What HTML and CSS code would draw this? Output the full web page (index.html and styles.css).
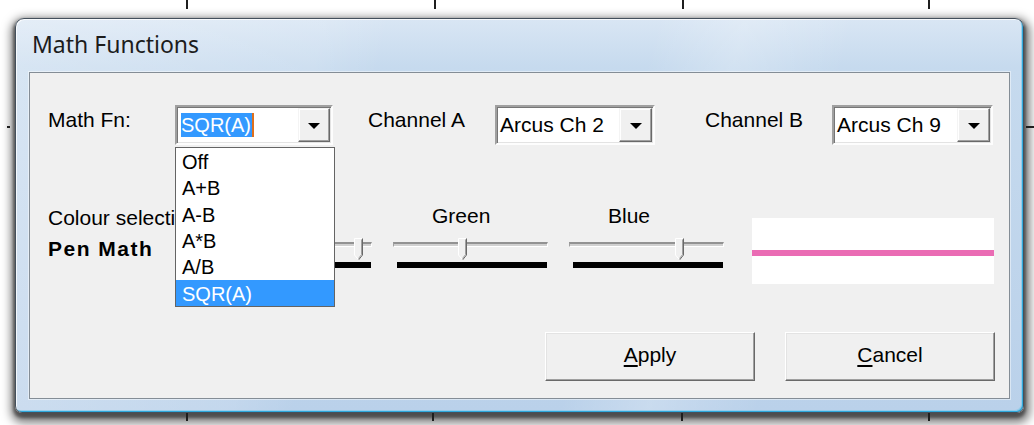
FILE: index.html
```html
<!DOCTYPE html>
<html lang="en">
<head>
<meta charset="utf-8">
<title>Math Functions</title>
<link rel="stylesheet" href="styles.css">
</head>
<body>
<div class="desk">
  <!-- axis ticks of the chart the dialog sits on -->
  <div class="chart">
    <span class="tick tt x1"></span>
    <span class="tick tt x2"></span>
    <span class="tick tt x3"></span>
    <span class="tick tt x4"></span>
    <span class="tick tb b1"></span>
    <span class="tick tb b2"></span>
    <span class="tick tb b3"></span>
    <span class="tick tb b4"></span>
    <span class="tick tl"></span>
    <span class="tick tr"></span>
  </div>

  <div class="window">
    <div class="titlebar"><span class="title">Math Functions</span></div>

    <div class="client">
      <div class="row-fn">
        <span class="lbl">Math Fn:</span>
        <div class="combo combo-fn">
          <div class="combo-text"><span class="sel">SQR(A)</span></div>
          <div class="combo-btn"><span class="arrow"></span></div>
          <ul class="droplist">
            <li>Off</li>
            <li>A+B</li>
            <li>A-B</li>
            <li>A*B</li>
            <li>A/B</li>
            <li class="hot">SQR(A)</li>
          </ul>
        </div>

        <span class="lbl lbl-a">Channel A</span>
        <div class="combo combo-a">
          <div class="combo-text">Arcus Ch 2</div>
          <div class="combo-btn"><span class="arrow"></span></div>
        </div>

        <span class="lbl lbl-b">Channel B</span>
        <div class="combo combo-b">
          <div class="combo-text">Arcus Ch 9</div>
          <div class="combo-btn"><span class="arrow"></span></div>
        </div>
      </div>

      <div class="row-colour">
        <div class="pen-col">
          <div class="cap">Colour selection</div>
          <div class="pen-name">Pen Math</div>
        </div>

        <div class="channel">
          <div class="ch-label">Red</div>
          <div class="track-area">
            <div class="groove"></div>
            <svg class="thumb" style="--v:234" width="9" height="23" viewBox="0 0 9 23">
              <polygon points="0,0 9,0 9,17 4.5,22.5 0,17" fill="#f0f0f0"/>
              <polyline points="0.5,17 0.5,0.5 8,0.5" fill="none" stroke="#fff"/>
              <polyline points="8.5,0.5 8.5,17 4.5,22" fill="none" stroke="#696969"/>
              <polyline points="7.5,1.5 7.5,16.6 4.5,20.5" fill="none" stroke="#a0a0a0"/>
              <polyline points="0.5,17 4.3,21.5" fill="none" stroke="#fff"/>
            </svg>
            <div class="level"></div>
          </div>
        </div>

        <div class="channel">
          <div class="ch-label">Green</div>
          <div class="track-area">
            <div class="groove"></div>
            <svg class="thumb" style="--v:108" width="9" height="23" viewBox="0 0 9 23">
              <polygon points="0,0 9,0 9,17 4.5,22.5 0,17" fill="#f0f0f0"/>
              <polyline points="0.5,17 0.5,0.5 8,0.5" fill="none" stroke="#fff"/>
              <polyline points="8.5,0.5 8.5,17 4.5,22" fill="none" stroke="#696969"/>
              <polyline points="7.5,1.5 7.5,16.6 4.5,20.5" fill="none" stroke="#a0a0a0"/>
              <polyline points="0.5,17 4.3,21.5" fill="none" stroke="#fff"/>
            </svg>
            <div class="level"></div>
          </div>
        </div>

        <div class="channel">
          <div class="ch-label">Blue</div>
          <div class="track-area">
            <div class="groove"></div>
            <svg class="thumb" style="--v:180" width="9" height="23" viewBox="0 0 9 23">
              <polygon points="0,0 9,0 9,17 4.5,22.5 0,17" fill="#f0f0f0"/>
              <polyline points="0.5,17 0.5,0.5 8,0.5" fill="none" stroke="#fff"/>
              <polyline points="8.5,0.5 8.5,17 4.5,22" fill="none" stroke="#696969"/>
              <polyline points="7.5,1.5 7.5,16.6 4.5,20.5" fill="none" stroke="#a0a0a0"/>
              <polyline points="0.5,17 4.3,21.5" fill="none" stroke="#fff"/>
            </svg>
            <div class="level"></div>
          </div>
        </div>

        <div class="preview"><div class="pen-line"></div></div>
      </div>

      <div class="row-buttons">
        <button class="btn" type="button"><u>A</u>pply</button>
        <button class="btn" type="button"><u>C</u>ancel</button>
      </div>
    </div>
  </div>
</div>
</body>
</html>
```

FILE: styles.css
```css
html, body {
  margin: 0;
  background: #fff;
}

body {
  font-family: "Liberation Sans", Arial, sans-serif;
  font-size: 21px;
  color: #000;
}

.desk {
  position: relative;
  width: 1034px;
  height: 425px;
  overflow: hidden;
  box-sizing: border-box;
  padding: 18px 0 0 15px;
}

/* chart ticks behind the dialog */
.chart .tick {
  position: absolute;
  background: #1e1e1e;
}
.tt { top: 0; width: 2px; height: 9px; }
.tb { top: 413px; width: 2px; height: 8px; z-index: 2; }
.x1 { left: 186px; }
.x2 { left: 434px; }
.x3 { left: 682px; }
.x4 { left: 928px; }
.b1 { left: 186px; }
.b2 { left: 432px; }
.b3 { left: 681px; }
.b4 { left: 928px; }
.tl { left: 7px; top: 126px; width: 3px; height: 2px; z-index: 2; }
.tr { left: 1026px; top: 126px; width: 8px; height: 2px; z-index: 2; }

/* Aero frame */
.window {
  position: relative;
  z-index: 1;
  width: 1009px;
  height: 395px;
  box-sizing: border-box;
  display: flex;
  flex-direction: column;
  padding: 0 13px 13px;
  border: 1px solid #44505c;
  border-radius: 9px 9px 7px 7px;
  background:
    linear-gradient(104deg,
      rgba(255,255,255,0.3) 0, rgba(255,255,255,0.14) 28%,
      rgba(255,255,255,0) 34%, rgba(255,255,255,0) 58%,
      rgba(255,255,255,0.22) 66%, rgba(255,255,255,0) 76%),
    linear-gradient(180deg, #d9e6f4 0, #c6daee 48px, #bad1ea 100%);
  box-shadow:
    inset 1px 1px 0 rgba(255,255,255,0.75),
    inset -1px -1px 0 #2fa9dc,
    inset -2px -2px 0 rgba(120,200,235,0.6),
    0 3px 3px 2px rgba(0,0,0,0.4),
    1px 5px 10px 5px rgba(0,0,0,0.5);
}

.titlebar {
  height: 53px;
  box-sizing: border-box;
  padding: 9px 0 0 3px;
}

.title {
  font-family: "Noto Sans", "Open Sans", sans-serif;
  font-size: 23px;
  line-height: 32px;
  color: #1c1c1c;
}

.client {
  flex: 1;
  display: flex;
  flex-direction: column;
  background: #f0f0f0;
  border: 1px solid #848d96;
  box-shadow: 0 0 0 1px rgba(255,255,255,0.45);
}

/* first row: function + channels */
.row-fn {
  display: flex;
  align-items: flex-start;
  height: 40px;
  margin-top: 32px;
  padding-left: 18px;
  position: relative;
  z-index: 3;
}

.lbl {
  flex: none;
  width: 127px;
  margin-top: 3px;
  line-height: 24px;
}
.lbl-a { margin-left: 35px; }
.lbl-b { margin-left: 50px; }

.combo {
  position: relative;
  flex: none;
  display: flex;
  height: 40px;
  box-sizing: border-box;
  padding: 1px;
  background: #fff;
  border: 2px solid;
  border-color: #a0a0a0 #fdfdfd #fdfdfd #a0a0a0;
  box-shadow: inset 1px 1px 0 #767676, inset -1px -1px 0 #e3e3e3;
}
.combo-fn { width: 158px; }
.combo-a { width: 160px; }
.combo-b { width: 161px; }

.combo-text {
  flex: 1;
  display: flex;
  align-items: center;
  padding-left: 2px;
  white-space: nowrap;
}
.combo-fn .combo-text { padding-left: 3px; }

.sel {
  font-size: 20px;
  line-height: 24px;
  padding-right: 1px;
  background: #3399ff;
  color: #fff;
  border-right: 2px solid #e0701c;
}

.combo-btn {
  flex: none;
  width: 33px;
  box-sizing: border-box;
  display: flex;
  align-items: center;
  justify-content: center;
  background: #f0f0f0;
  border: 1px solid;
  border-color: #f4f4f4 #696969 #696969 #f4f4f4;
  box-shadow: inset -1px -1px 0 #a0a0a0, inset 1px 1px 0 #fff;
}
.combo-fn .combo-btn { width: 32px; }

.arrow {
  width: 0;
  height: 0;
  margin-top: 2px;
  border-left: 6px solid transparent;
  border-right: 6px solid transparent;
  border-top: 6px solid #000;
}

/* open list of the function combo */
.droplist {
  position: absolute;
  left: -2px;
  top: calc(100% + 4px);
  z-index: 5;
  width: 160px;
  box-sizing: border-box;
  margin: 0;
  padding: 0;
  list-style: none;
  background: #fff;
  border: 1px solid #646464;
}
.droplist li {
  height: 26.33px;
  box-sizing: border-box;
  padding: 3px 0 0 6px;
  font-size: 20px;
  line-height: 23.33px;
}
.droplist .hot {
  background: #3399ff;
  color: #fff;
}

/* second row: pen colour */
.row-colour {
  display: flex;
  align-items: flex-start;
  margin-top: 59px;
  padding-left: 18px;
  position: relative;
  z-index: 1;
}

.pen-col {
  flex: none;
  width: 169px;
}
.cap {
  margin-top: 2px;
  line-height: 24px;
  white-space: nowrap;
}
.pen-name {
  margin-top: 7px;
  line-height: 24px;
  font-weight: bold;
  letter-spacing: 1.5px;
}

.channel {
  flex: none;
  width: 155px;
}
.channel + .channel { margin-left: 21px; }

.ch-label {
  padding-left: 39px;
  line-height: 24px;
}

.track-area {
  position: relative;
  height: 40px;
  box-sizing: border-box;
  padding-top: 14px;
}

.groove {
  height: 5px;
  box-sizing: border-box;
  background: #d0d0d0;
  border-style: solid;
  border-width: 2px 1px 1px 1px;
  border-color: #929292 #fff #fff #a0a0a0;
}

.thumb {
  position: absolute;
  top: 10px;
  left: calc(3px + var(--v) * 146px / 255);
  display: block;
}

.level {
  height: 6px;
  margin: 15px 1px 0 4px;
  background: #000;
}

.preview {
  flex: none;
  width: 242px;
  height: 66px;
  margin: 14px 0 0 28px;
  box-sizing: border-box;
  padding-top: 32px;
  background: #fff;
}
.pen-line {
  height: 6px;
  background: #ea6cb4;
}

/* buttons */
.row-buttons {
  display: flex;
  justify-content: flex-end;
  gap: 30px;
  margin-top: 48px;
  padding-right: 14px;
}

.btn {
  width: 210px;
  height: 49px;
  padding: 0 0 4px;
  font-family: "Liberation Sans", Arial, sans-serif;
  font-size: 21px;
  color: #000;
  background: #f0f0f0;
  border: 1px solid;
  border-color: #fff #696969 #696969 #fff;
  border-radius: 0;
  box-shadow: inset -1px -1px 0 #a0a0a0, inset 1px 1px 0 #e3e3e3;
}
.btn u {
  text-underline-offset: 3px;
}
```
